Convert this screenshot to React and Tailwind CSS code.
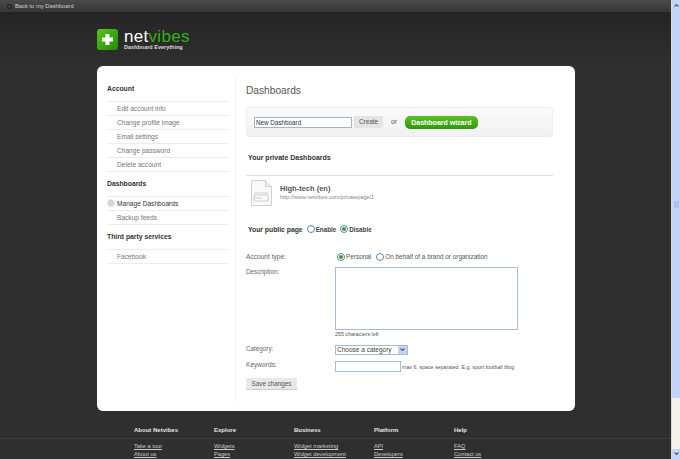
import React from "react";

const Item = ({ children, active, first }) => (
  <div className={`relative h-[13px] border-b border-[#ececec] box-content pl-[10px] text-[6.6px] leading-[13px] ${first ? "border-t" : ""} ${active ? "text-[#333]" : "text-[#777]"}`}>
    {active && <span className="absolute left-0 top-[2px] w-[8px] h-[8px] rounded-full bg-[#d4d4d4] border border-[#e6e6e6]" />}
    {children}
  </div>
);

const Radio = ({ on }) => (
  <span className="inline-flex items-center justify-center w-[8px] h-[8px] rounded-full border border-[#5b83ae] bg-white shrink-0">
    {on && <span className="w-[4px] h-[4px] rounded-full bg-[#3c9a3c]" />}
  </span>
);

const Col = ({ title, a, b, w }) => (
  <div className={w}>
    <div className="font-bold text-[6px] leading-[8px] text-[#e4e4e4]">{title}</div>
    <div className="mt-[8px] text-[5.7px] leading-[8px] text-[#c8c8c8] underline">{a}</div>
    <div className="text-[5.7px] leading-[8px] text-[#c8c8c8] underline">{b}</div>
  </div>
);

const Heading = ({ children, className }) => (
  <div className={`font-bold text-[6.8px] leading-[10px] text-[#333] ${className}`}>{children}</div>
);

export default function App() {
  return (
    <div className="flex w-[680px] h-[459px] overflow-hidden bg-[#2f2f2f] font-['Liberation_Sans',sans-serif]">
      <div className="w-[671px] h-full flex flex-col">
        <div className="h-[12px] shrink-0 flex items-center bg-gradient-to-b from-[#4a4a4a] to-[#363636] pl-[7px] text-[5.8px] text-[#cfcfcf]">
          <span className="w-[5px] h-[5px] rounded-full bg-[#222] mr-[3px] text-[4px] leading-[5px] text-center text-white">‹</span>
          Back to my Dashboard
        </div>
        <div className="bg-gradient-to-b from-[#252525] to-[#2f2f2f] h-[54px] shrink-0 flex items-start pl-[97px] pt-[17px]">
          <div className="w-[21px] h-[21px] rounded-[3px] bg-gradient-to-br from-[#58c51c] to-[#1d8c06] flex items-center justify-center">
            <svg width="13" height="13" viewBox="0 0 13 13"><path d="M4.5 1h4v3.5H12v4H8.5V12h-4V8.5H1v-4h3.5z" fill="#fff" /></svg>
          </div>
          <div className="ml-[6px]">
            <div className="text-[17px] leading-[15px] tracking-[0.3px]">
              <span className="text-white">net</span><span className="text-[#2fb212]">vibes</span>
            </div>
            <div className="text-[5.5px] font-bold leading-[7px] text-[#dcdcdc]">Dashboard Everything</div>
          </div>
        </div>
        <div className="ml-[97px] w-[478px] h-[345px] shrink-0 rounded-[6px] bg-white flex">
          <aside className="w-[139px] shrink-0 border-r border-[#f0f0f0] my-[9px] pl-[10px] pr-[6px]">
            <Heading className="mt-[9px]">Account</Heading>
            <div className="mt-[7px]">
              <Item first>Edit account info</Item>
              <Item>Change profile image</Item>
              <Item>Email settings</Item>
              <Item>Change password</Item>
              <Item>Delete account</Item>
            </div>
            <Heading className="mt-[7px]">Dashboards</Heading>
            <div className="mt-[7px]">
              <Item first active>Manage Dashboards</Item>
              <Item>Backup feeds</Item>
            </div>
            <Heading className="mt-[7px]">Third party services</Heading>
            <div className="mt-[7px]">
              <Item first>Facebook</Item>
            </div>
          </aside>
          <main className="flex-1 pl-[10px] pr-[22px] text-[7px] text-[#555]">
            <div className="mt-[18px] text-[10.2px] leading-[13px] text-[#555]">Dashboards</div>
            <div className="mt-[10px] h-[30px] rounded-[3px] border border-[#eeeeee] bg-gradient-to-b from-[#fbfbfb] to-[#f1f1f1] flex items-center pl-[7px] w-[307px]">
              <div className="w-[98px] h-[11px] border border-[#9db5cd] bg-white pl-[1px] text-[6.3px] leading-[9px] text-[#333]">New Dashboard</div>
              <div className="ml-[2px] w-[29px] h-[12px] bg-[#e4e4e4] text-center text-[6.4px] leading-[12px] text-[#555]">Create</div>
              <span className="ml-[8px] text-[6.6px] text-[#555]">or</span>
              <div className="ml-[8px] w-[73px] h-[13px] rounded-[5px] bg-gradient-to-b from-[#5cc021] to-[#2d9a0a] text-center text-[7px] font-bold leading-[13px] text-white">Dashboard wizard</div>
            </div>
            <div className="mt-[16px] ml-[2px] font-bold text-[7px] leading-[9px] text-[#333]">Your private Dashboards</div>
            <div className="mt-[13px] w-[307px] border-t border-[#dddddd]" />
            <div className="mt-[4px] ml-[5px] flex">
              <svg width="21" height="26" viewBox="0 0 21 26" className="shrink-0">
                <path d="M.5.5h14l6 6v19H.5z" fill="#f9f9f9" stroke="#cfcfcf" />
                <path d="M14.5.5v6h6" fill="#eee" stroke="#cfcfcf" />
                <path d="M3 13h14M3 15h14M3 15v6h14v-6M3 18h8" fill="none" stroke="#bdbdbd" strokeWidth=".7" />
              </svg>
              <div className="ml-[8px] mt-[4px]">
                <div className="font-bold text-[7.5px] leading-[10px] text-[#555]">High-tech (en)</div>
                <div className="text-[5.5px] leading-[7px] text-[#888]">http://www.netvibes.com/privatepage/1</div>
              </div>
            </div>
            <div className="mt-[19px] ml-[2px] flex items-center h-[10px] text-[6.8px] text-[#333]">
              <span className="font-bold">Your public page</span>
              <span className="ml-[4px] mt-[-2px] mr-[1px] flex"><Radio /></span>
              <span className="font-bold text-[6.3px] text-[#444]">Enable</span>
              <span className="ml-[4px] mt-[-2px] mr-[1px] flex"><Radio on /></span>
              <span className="font-bold text-[6.3px] text-[#444]">Disable</span>
            </div>
            <div className="mt-[16px] flex h-[12px] items-center text-[6.4px]">
              <span className="w-[91px] shrink-0 text-[6.6px] text-[#666]">Account type:</span>
              <span className="mr-[1px] flex"><Radio on /></span><span className="text-[#555]">Personal</span>
              <span className="ml-[5px] mr-[1px] flex"><Radio /></span><span className="text-[#555]">On behalf of a brand or organization</span>
            </div>
            <div className="flex mt-[4px]">
              <span className="w-[89px] shrink-0 text-[#666] text-[6.3px] leading-[9px]">Description:</span>
              <div>
                <div className="w-[183px] h-[63px] border border-[#a5bcd8] bg-white" />
                <div className="mt-[1px] text-[5.3px] leading-[7px] text-[#555]">255 characters left</div>
              </div>
            </div>
            <div className="flex mt-[7px] items-start">
              <span className="w-[89px] shrink-0 text-[#666] text-[6.3px] leading-[9px] mt-[-1px]">Category:</span>
              <div className="w-[73px] h-[10px] border border-[#a5bcd8] bg-white flex items-center justify-between pl-[1px] text-[6.5px] text-[#444]">
                <span>Choose a category</span>
                <span className="w-[9px] h-[8px] bg-[#c5d5f0] flex items-center justify-center">
                  <svg width="5" height="4" viewBox="0 0 5 4"><path d="M.5.5 2.5 2.5 4.5.5" fill="none" stroke="#4a5f90" strokeWidth="1.2" /></svg>
                </span>
              </div>
            </div>
            <div className="flex mt-[6px] items-start">
              <span className="w-[89px] shrink-0 text-[#666] text-[6.6px] leading-[9px] mt-[-1px]">Keywords:</span>
              <div className="w-[66px] h-[11px] border border-[#a5bcd8] bg-white" />
              <span className="ml-[1px] mt-[2px] text-[5.3px] leading-[8px] text-[#555]">max 6, space separated. E.g. sport football blog</span>
            </div>
            <div className="mt-[6px] w-[51px] h-[12px] bg-[#e8e8e8] border-b border-[#ccc] text-center text-[6.3px] leading-[12px] text-[#555]">Save changes</div>
          </main>
        </div>
        <div className="relative flex-1 pl-[134px] pt-[15px]">
          <div className="flex">
            <Col w="w-[80px]" title="About Netvibes" a="Take a tour" b="About us" />
            <Col w="w-[80px]" title="Explore" a="Widgets" b="Pages" />
            <Col w="w-[80px]" title="Business" a="Widget marketing" b="Widget development" />
            <Col w="w-[80px]" title="Platform" a="API" b="Developers" />
            <Col w="w-[80px]" title="Help" a="FAQ" b="Contact us" />
          </div>
          <div className="absolute left-0 right-0 top-[27px] border-t border-[#3d3d3d]" />
        </div>
      </div>
      <div className="w-[9px] h-full flex flex-col bg-[#f3f2ec] border-l border-[#dcdcd4]">
        <div className="h-[10px] bg-[#c5d5f7] flex items-center justify-center shrink-0">
          <svg width="5" height="4" viewBox="0 0 5 4"><path d="M.5 3.5 2.5 1.5 4.5 3.5" fill="none" stroke="#4a5f90" strokeWidth="1.2" /></svg>
        </div>
        <div className="h-[388px] shrink-0 bg-[#c3d4f8] flex items-center justify-center">
          <span className="w-[5px] h-[7px] bg-[#aebff0]" />
        </div>
        <div className="flex-1" />
        <div className="h-[10px] bg-[#c5d5f7] flex items-center justify-center shrink-0">
          <svg width="5" height="4" viewBox="0 0 5 4"><path d="M.5.5 2.5 2.5 4.5.5" fill="none" stroke="#4a5f90" strokeWidth="1.2" /></svg>
        </div>
      </div>
    </div>
  );
}
